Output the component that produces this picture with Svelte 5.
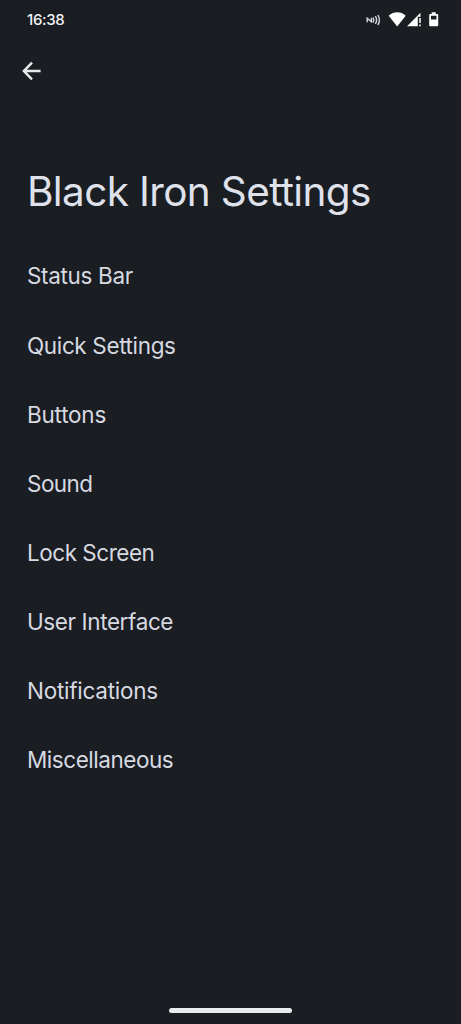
<script>
  const items = [
    { label: 'Status Bar', spacing: -0.33 },
    { label: 'Quick Settings', spacing: -0.36 },
    { label: 'Buttons', spacing: -0.22 },
    { label: 'Sound', spacing: -0.55 },
    { label: 'Lock Screen', spacing: -0.48 },
    { label: 'User Interface', spacing: -0.39 },
    { label: 'Notifications', spacing: -0.25 },
    { label: 'Miscellaneous', spacing: -0.46 }
  ];
</script>

<div class="screen">
  <header class="status">
    <span class="time">16:38</span>
    <svg class="indicators" width="76" height="20" viewBox="365 10 76 20" fill="none" aria-hidden="true">
      <path d="M367.2 22.2v-4l4.2 3.6v-4" stroke="#d7dbe0" stroke-width="1.4" />
      <path d="M373 17.5q1.6 2.5 0 5M375.4 16q2.4 4 0 8M377.9 15q3 5 0 10" stroke="#d7dbe0" stroke-width="1.4" />
      <path d="M388.7 15.8C393.5 11.2 401 11.2 405.7 15.8L397.2 26.4Z" fill="#fff" />
      <path d="M407 26.3L420.5 12.8V16.8H417.8V26.3Z" fill="#fff" />
      <path d="M420 18V22.9M420 24.4V26.3" stroke="#fff" stroke-width="1.5" />
      <path fill-rule="evenodd" d="M431.7 12.2h4v1.7h1.5q1 0 1 1v10.3q0 1-1 1h-7q-1 0-1-1V14.9q0-1 1-1h1.5zM431 15.8v3.6h5.5v-3.6z" fill="#fff" />
    </svg>
  </header>
  <nav>
    <button aria-label="Back">
      <svg width="20" height="20" viewBox="0 0 20 20" fill="none" stroke="#e7e9ed" stroke-width="2.5">
        <path d="M18.6 10H2.4M10 1.6L1.9 10L10 18.4" />
      </svg>
    </button>
  </nav>
  <h1>Black Iron Settings</h1>
  <main>
    {#each items as item}
      <div class="item"><span style:letter-spacing={`${item.spacing}px`}>{item.label}</span></div>
    {/each}
  </main>
  <footer><div class="handle"></div></footer>
</div>

<style>
  :global(body) { background: #1a1d22; }
  .screen {
    box-sizing: border-box;
    height: 1024px;
    display: flex;
    flex-direction: column;
    background: #1a1d22;
    color: #dfe1eb;
    font-family: Inter, sans-serif;
  }
  .status {
    height: 39px;
    box-sizing: border-box;
    padding: 0 20px 0 27px;
    display: flex;
    align-items: center;
    justify-content: space-between;
  }
  .time { font-size: 15px; font-weight: 500; color: #f0f2f5; letter-spacing: -0.35px; }
  .indicators { margin-top: 1px; }
  nav { height: 63px; display: flex; align-items: center; padding-left: 22px; }
  button { display: flex; padding: 0; border: 0; background: none; }
  h1 {
    margin: 64px 0 0 27px;
    font-size: 40.5px;
    line-height: 52px;
    font-weight: 400;
    letter-spacing: -0.64px;
    white-space: nowrap;
  }
  main { margin-top: 23.4px; }
  .item {
    height: 69.1px;
    display: flex;
    align-items: center;
    padding-left: 27px;
    font-size: 22.5px;
    color: #d7d9e1;
    white-space: nowrap;
  }
  footer { flex: 1; display: flex; align-items: flex-end; justify-content: center; padding-bottom: 11px; }
  .handle { width: 123px; height: 5px; border-radius: 3px; background: #e9ebef; }
</style>
